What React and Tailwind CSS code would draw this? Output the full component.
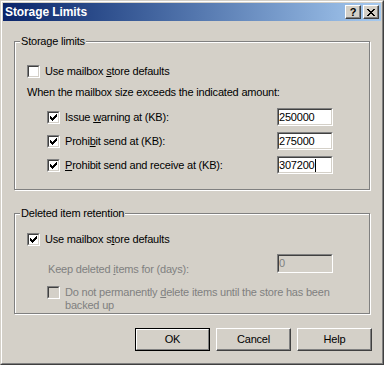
import React from "react";

const CHECK = ["......#", ".....##", "#...###", "##.###.", "#####..", ".###...", "..#...."];
const CROSS = ["##....##", ".##..##.", "..####..", "...##...", "..####..", ".##..##.", "##....##"];

const PixelGlyph = ({ rows, color }) => (
  <svg
    width={rows[0].length}
    height={rows.length}
    shapeRendering="crispEdges"
    className="block"
  >
    {rows.map((r, y) =>
      r
        .split("")
        .map((c, x) =>
          c === "#" ? (
            <rect key={`${x}-${y}`} x={x} y={y} width="1" height="1" fill={color} />
          ) : null
        )
    )}
  </svg>
);

const Checkbox = ({ checked, disabled }) => (
  <div className="w-[13px] h-[13px] shrink-0 border border-t-[#808080] border-l-[#808080] border-b-white border-r-white">
    <div
      className={`w-full h-full border border-t-[#404040] border-l-[#404040] border-b-[#d4d0c8] border-r-[#d4d0c8] flex items-center justify-center ${
        disabled ? "bg-[#d4d0c8]" : "bg-white"
      }`}
    >
      {checked && <PixelGlyph rows={CHECK} color="#000" />}
    </div>
  </div>
);

const Field = ({ value, disabled, caret, tall }) => (
  <div
    className={`w-[56px] shrink-0 border border-t-[#808080] border-l-[#808080] border-b-white border-r-white ${
      tall ? "h-[19px]" : "h-[18px]"
    }`}
  >
    <div
      className={`h-full border border-t-[#404040] border-l-[#404040] border-b-[#d4d0c8] border-r-[#d4d0c8] flex items-center ${
        disabled ? "bg-[#d4d0c8] text-[#808080]" : "bg-white"
      }`}
    >
      <span>{value}</span>
      {caret && <span className="w-px h-[13px] bg-black" />}
    </div>
  </div>
);

const Group = ({ title, className, children }) => (
  <div
    className={`relative ml-[11px] w-[356px] border border-[#808080] shadow-[inset_1px_1px_0_#fff,1px_1px_0_#fff] ${className}`}
  >
    <span className="absolute left-[5px] top-[-7px] bg-[#d4d0c8] px-[1px] leading-[13px] whitespace-nowrap">
      {title}
    </span>
    {children}
  </div>
);

const LimitRow = ({ children, value, caret }) => (
  <div className="h-[24px] flex items-center gap-[5px] pl-[20px]">
    <Checkbox checked />
    <span className="flex-1 whitespace-nowrap">{children}</span>
    <Field value={value} caret={caret} />
  </div>
);

const Button = ({ children, isDefault }) =>
  isDefault ? (
    <div className="w-[75px] h-[23px] border border-black">
      <div className="h-full border border-t-white border-l-white border-b-[#808080] border-r-[#808080] flex items-center justify-center">
        {children}
      </div>
    </div>
  ) : (
    <div className="w-[75px] h-[23px] border border-t-white border-l-white border-b-[#404040] border-r-[#404040] shadow-[inset_-1px_-1px_0_#808080] flex items-center justify-center">
      {children}
    </div>
  );

const CaptionButton = ({ children }) => (
  <div className="w-[16px] h-[14px] border border-t-white border-l-white border-b-[#404040] border-r-[#404040] bg-[#d4d0c8] shadow-[inset_-1px_-1px_0_#808080] flex items-center justify-center">
    {children}
  </div>
);

export default function App() {
  return (
    <div className="w-[384px] h-[365px] bg-[#d4d0c8] border border-t-[#d4d0c8] border-l-[#d4d0c8] border-b-[#404040] border-r-[#404040] font-['Liberation_Sans',Arial,sans-serif] text-[11px] leading-[13px] tracking-[-0.2px] text-black select-none">
      <div className="h-full border border-t-white border-l-white border-b-[#808080] border-r-[#808080] p-px flex flex-col">
        {/* title bar */}
        <div className="h-[18px] shrink-0 flex items-center bg-linear-to-r from-[#0a246a] to-[#a6caf0] pl-[2px] pr-[2px]">
          <span className="flex-1 text-white font-bold text-[12px] leading-[18px] tracking-[-0.1px]">
            Storage Limits
          </span>
          <div className="flex gap-[2px]">
            <CaptionButton>
              <span className="font-bold text-[11px] leading-[11px] tracking-normal">?</span>
            </CaptionButton>
            <CaptionButton>
              <PixelGlyph rows={CROSS} color="#000" />
            </CaptionButton>
          </div>
        </div>

        {/* storage limits */}
        <Group title="Storage limits" className="mt-[20px] h-[149px] pt-[23px] pl-[12px] pr-[36px]">
          <div className="h-[13px] flex items-center gap-[5px]">
            <Checkbox />
            <span className="whitespace-nowrap">
              Use mailbox <span className="underline">s</span>tore defaults
            </span>
          </div>
          <div className="mt-[8px] whitespace-nowrap">
            When the mailbox size exceeds the indicated amount:
          </div>
          <div className="mt-[6px]">
            <LimitRow value="250000">
              Issue <span className="underline">w</span>arning at (KB):
            </LimitRow>
            <LimitRow value="275000">
              Prohi<span className="underline">b</span>it send at (KB):
            </LimitRow>
            <LimitRow value="307200" caret>
              <span className="underline">P</span>rohibit send and receive at (KB):
            </LimitRow>
          </div>
        </Group>

        {/* deleted item retention */}
        <Group title="Deleted item retention" className="mt-[23px] h-[101px] pt-[19px] pl-[12px] pr-[36px]">
          <div className="h-[13px] flex items-center gap-[5px]">
            <Checkbox checked />
            <span className="whitespace-nowrap">
              Use mailbox s<span className="underline">t</span>ore defaults
            </span>
          </div>
          <div className="mt-[8px] flex items-start pl-[21px]">
            <span className="flex-1 mt-[9px] text-[#808080] whitespace-nowrap">
              Keep deleted <span className="underline">i</span>tems for (days):
            </span>
            <Field value="0" disabled tall />
          </div>
          <div className="mt-[10px] flex items-start gap-[5px] pl-[20px]">
            <Checkbox disabled />
            <span className="text-[#808080] whitespace-nowrap">
              Do not permanently <span className="underline">d</span>elete items until the store has been
              <br />
              backed up
            </span>
          </div>
        </Group>

        {/* buttons */}
        <div className="mt-[14px] flex justify-end gap-[6px] pr-[9px]">
          <Button isDefault>OK</Button>
          <Button>Cancel</Button>
          <Button>Help</Button>
        </div>
      </div>
    </div>
  );
}
